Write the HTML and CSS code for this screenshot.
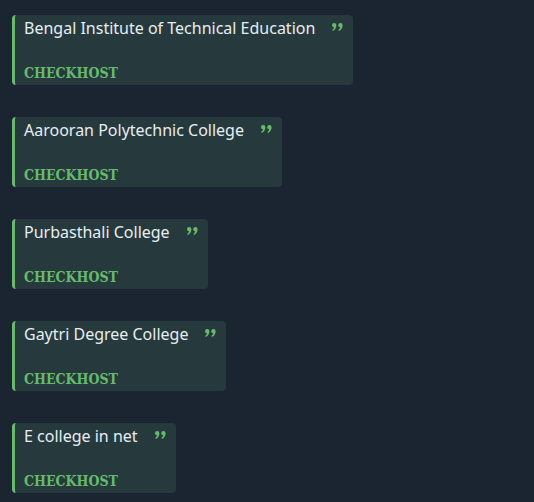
FILE: index.html
```html
<html>

<head>
    <title>Hosts</title>
    <link rel="stylesheet" href="styles.css">
</head>

<body>
    <main class="list">
        <div class="card">
            <span class="card-title">Bengal Institute of Technical Education</span>
            <svg class="quote" viewBox="0 0 11 8"><path d="M0 2.2a2.2 2.2 0 1 1 4.4 0q0 3.8-3.6 5.8l-.6-.9q1.5-1.2 1.8-2.8A2.2 2.2 0 0 1 0 2.2z"/><path d="M6.2 2.2a2.2 2.2 0 1 1 4.4 0q0 3.8-3.6 5.8l-.6-.9q1.5-1.2 1.8-2.8A2.2 2.2 0 0 1 6.2 2.2z"/></svg>
            <span class="card-tag">CHECKHOST</span>
        </div>
        <div class="card">
            <span class="card-title">Aarooran Polytechnic College</span>
            <svg class="quote" viewBox="0 0 11 8"><path d="M0 2.2a2.2 2.2 0 1 1 4.4 0q0 3.8-3.6 5.8l-.6-.9q1.5-1.2 1.8-2.8A2.2 2.2 0 0 1 0 2.2z"/><path d="M6.2 2.2a2.2 2.2 0 1 1 4.4 0q0 3.8-3.6 5.8l-.6-.9q1.5-1.2 1.8-2.8A2.2 2.2 0 0 1 6.2 2.2z"/></svg>
            <span class="card-tag">CHECKHOST</span>
        </div>
        <div class="card">
            <span class="card-title">Purbasthali College</span>
            <svg class="quote" viewBox="0 0 11 8"><path d="M0 2.2a2.2 2.2 0 1 1 4.4 0q0 3.8-3.6 5.8l-.6-.9q1.5-1.2 1.8-2.8A2.2 2.2 0 0 1 0 2.2z"/><path d="M6.2 2.2a2.2 2.2 0 1 1 4.4 0q0 3.8-3.6 5.8l-.6-.9q1.5-1.2 1.8-2.8A2.2 2.2 0 0 1 6.2 2.2z"/></svg>
            <span class="card-tag">CHECKHOST</span>
        </div>
        <div class="card">
            <span class="card-title">Gaytri Degree College</span>
            <svg class="quote" viewBox="0 0 11 8"><path d="M0 2.2a2.2 2.2 0 1 1 4.4 0q0 3.8-3.6 5.8l-.6-.9q1.5-1.2 1.8-2.8A2.2 2.2 0 0 1 0 2.2z"/><path d="M6.2 2.2a2.2 2.2 0 1 1 4.4 0q0 3.8-3.6 5.8l-.6-.9q1.5-1.2 1.8-2.8A2.2 2.2 0 0 1 6.2 2.2z"/></svg>
            <span class="card-tag">CHECKHOST</span>
        </div>
        <div class="card">
            <span class="card-title">E college in net</span>
            <svg class="quote" viewBox="0 0 11 8"><path d="M0 2.2a2.2 2.2 0 1 1 4.4 0q0 3.8-3.6 5.8l-.6-.9q1.5-1.2 1.8-2.8A2.2 2.2 0 0 1 0 2.2z"/><path d="M6.2 2.2a2.2 2.2 0 1 1 4.4 0q0 3.8-3.6 5.8l-.6-.9q1.5-1.2 1.8-2.8A2.2 2.2 0 0 1 6.2 2.2z"/></svg>
            <span class="card-tag">CHECKHOST</span>
        </div>
    </main>
</body>

</html>
```

FILE: styles.css
```css
body {
    margin: 0;
    background-color: #1b2431;
    font-family: "Noto Sans", sans-serif;
}

.list {
    display: flex;
    flex-direction: column;
    align-items: flex-start;
    gap: 32px;
    padding: 15px 0 0 12px;
}

.card {
    display: grid;
    grid-template-columns: auto auto;
    column-gap: 17px;
    padding: 1px 10px 0 9px;
    background-color: #263a3d;
    border-left: 3px solid #66bb6a;
    border-radius: 4px;
}

.card-title {
    color: #e6edf3;
    font-size: 16px;
    line-height: 24px;
}

.quote {
    width: 11px;
    height: 8px;
    margin-top: 7px;
    fill: #66bb6a;
}

.card-tag {
    grid-column: 1 / 3;
    margin-top: 21px;
    color: #66bb6a;
    font-family: "DejaVu Serif", serif;
    font-stretch: condensed;
    font-weight: bold;
    font-size: 14px;
    line-height: 24px;
}
```
